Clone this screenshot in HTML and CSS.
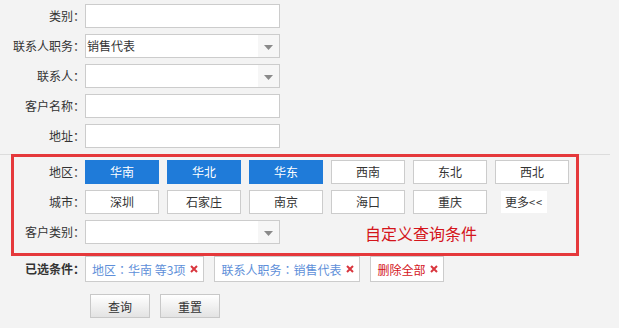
FILE: index.html
```html
<!DOCTYPE html>
<html lang="zh">
<head>
<meta charset="utf-8">
<link rel="stylesheet" href="styles.css">
</head>
<body>
<div class="page">
  <div class="row"><label class="label">类别<span class="c">：</span></label><div class="input"></div></div>
  <div class="row"><label class="label">联系人职务<span class="c">：</span></label><div class="input select"><span class="val">销售代表</span><span class="arrow"><svg width="9" height="5" viewBox="0 0 9 5"><path d="M0 0H9L4.5 5Z" fill="#8a8a8a"/></svg></span></div></div>
  <div class="row"><label class="label">联系人<span class="c">：</span></label><div class="input select"><span class="val"></span><span class="arrow"><svg width="9" height="5" viewBox="0 0 9 5"><path d="M0 0H9L4.5 5Z" fill="#8a8a8a"/></svg></span></div></div>
  <div class="row"><label class="label">客户名称<span class="c">：</span></label><div class="input"></div></div>
  <div class="row"><label class="label">地址<span class="c">：</span></label><div class="input"></div></div>

  <div class="divider"></div>

  <div class="custom">
    <div class="row"><label class="label short">地区<span class="c">：</span></label>
      <div class="opts">
        <span class="opt on">华南</span><span class="opt on">华北</span><span class="opt on">华东</span><span class="opt">西南</span><span class="opt">东北</span><span class="opt">西北</span>
      </div>
    </div>
    <div class="row"><label class="label short">城市<span class="c">：</span></label>
      <div class="opts">
        <span class="opt">深圳</span><span class="opt">石家庄</span><span class="opt">南京</span><span class="opt">海口</span><span class="opt">重庆</span><span class="more">更多<span class="lt">&lt;&lt;</span></span>
      </div>
    </div>
    <div class="row last"><label class="label short">客户类别<span class="c">：</span></label><div class="input select"><span class="val"></span><span class="arrow"><svg width="9" height="5" viewBox="0 0 9 5"><path d="M0 0H9L4.5 5Z" fill="#8a8a8a"/></svg></span></div>
      <span class="note">自定义查询条件</span>
    </div>
  </div>

  <div class="chosen">
    <label class="label bold">已选条件<span class="c">：</span></label>
    <span class="tag">地区<span class="c">：</span>华南 等3项<i class="x"><svg width="8" height="8" viewBox="0 0 8 8"><path d="M1 1L7 7M7 1L1 7" stroke="#d9363e" stroke-width="2"/></svg></i></span>
    <span class="tag">联系人职务<span class="c">：</span>销售代表<i class="x"><svg width="8" height="8" viewBox="0 0 8 8"><path d="M1 1L7 7M7 1L1 7" stroke="#d9363e" stroke-width="2"/></svg></i></span>
    <span class="tag del">删除全部<i class="x"><svg width="8" height="8" viewBox="0 0 8 8"><path d="M1 1L7 7M7 1L1 7" stroke="#d9363e" stroke-width="2"/></svg></i></span>
  </div>

  <div class="actions">
    <button class="btn">查询</button>
    <button class="btn">重置</button>
  </div>
</div>
</body>
</html>
```

FILE: styles.css
```css
html, body {
  margin: 0;
  padding: 0;
  background: #f3f3f3;
}
body {
  font-family: "Noto Sans CJK SC", "Microsoft YaHei", sans-serif;
  font-size: 12px;
  color: #333;
}
.page {
  padding-top: 4px;
}
.c {
  font-family: "Noto Sans CJK TC", "Noto Sans CJK SC", sans-serif;
}
.row {
  display: flex;
  align-items: center;
  height: 24px;
  margin-bottom: 6px;
}
.label {
  width: 85px;
  flex: none;
  text-align: right;
  line-height: 24px;
  white-space: nowrap;
}
.label.short {
  width: 71px;
}
.label.bold {
  font-weight: bold;
  color: #333;
}
.input {
  width: 193px;
  height: 22px;
  border: 1px solid #cccccc;
  background: #fff;
  display: flex;
  align-items: center;
  flex: none;
}
.select .val {
  flex: 1;
  padding-left: 1px;
  color: #333;
  line-height: 22px;
}
.select .arrow {
  width: 21px;
  height: 22px;
  background: #f6f6f6;
  display: flex;
  align-items: center;
  justify-content: center;
  padding-top: 3px;
  box-sizing: border-box;
}
.divider {
  width: 610px;
  height: 1px;
  background: #dcdcdc;
}
.custom {
  width: 562px;
  margin-left: 11px;
  margin-top: -1px;
  border: 3px solid #e5383b;
  padding: 3px 0;
}
.opts {
  display: flex;
  gap: 8px;
  align-items: center;
}
.opt {
  width: 72px;
  height: 22px;
  border: 1px solid #cccccc;
  background: #fff;
  text-align: center;
  line-height: 22px;
  color: #333;
}
.opt.on {
  background: #1f7bd9;
  border-color: #1f7bd9;
  color: #fff;
}
.more {
  margin-left: 6px;
  width: 46px;
  height: 22px;
  background: #fff;
  line-height: 22px;
  text-align: center;
  color: #333;
  white-space: nowrap;
}
.more .lt {
  font-size: 11px;
  letter-spacing: 1px;
}
.note {
  margin-left: 85px;
  font-size: 16px;
  color: #d4151b;
  line-height: 24px;
  padding-top: 2px;
}
.chosen {
  display: flex;
  align-items: center;
  gap: 10px;
  height: 26px;
}
.chosen .label {
  margin-right: -10px;
  line-height: 26px;
}
.tag {
  height: 24px;
  border: 1px solid #cccccc;
  background: #fff;
  display: flex;
  align-items: center;
  padding: 0 5px 0 6px;
  color: #5e8fd9;
  white-space: nowrap;
}
.tag.del {
  color: #d4151b;
}
.x {
  display: flex;
  margin-left: 5px;
}
.actions {
  display: flex;
  gap: 10px;
  margin-top: 12px;
  padding-left: 90px;
}
.btn {
  width: 60px;
  height: 24px;
  border: 1px solid #c8c8c8;
  background: linear-gradient(#ffffff, #e3e3e3);
  font-family: inherit;
  font-size: 12px;
  color: #333;
  padding: 0;
  margin: 0;
}
```
